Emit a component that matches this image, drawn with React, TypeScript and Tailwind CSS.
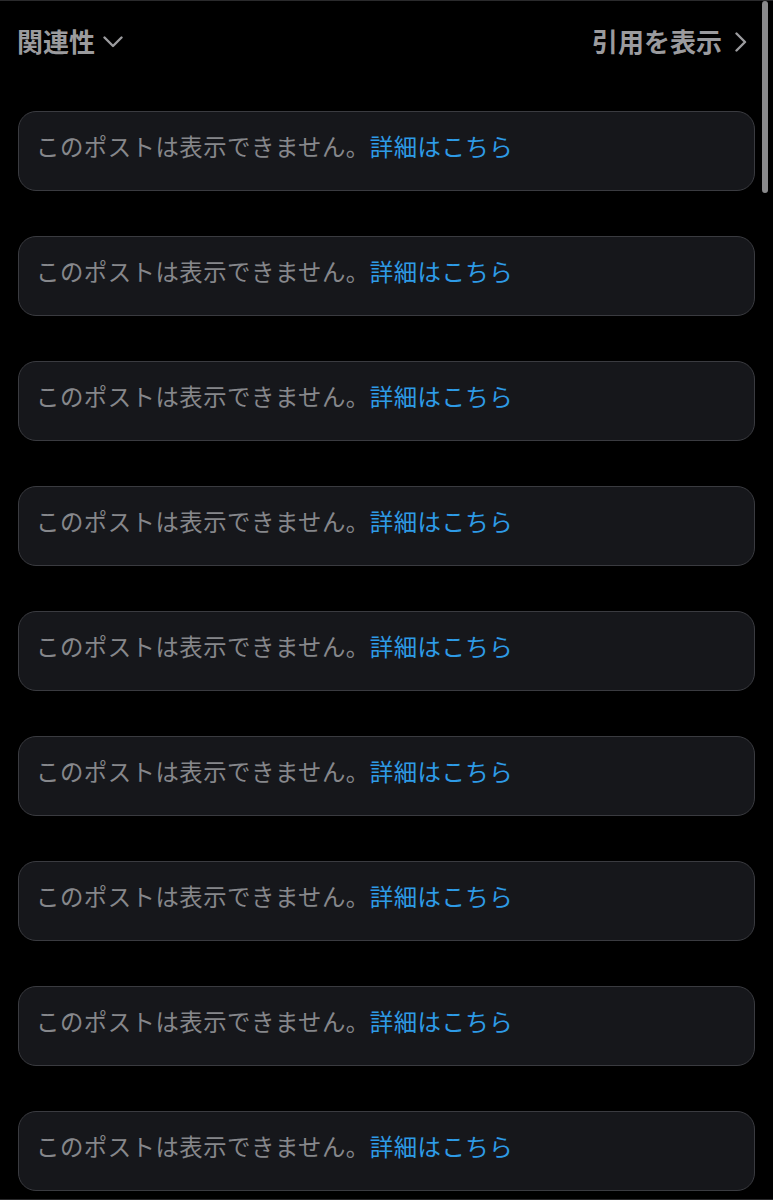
const font = { fontFamily: '"Noto Sans CJK JP", "Noto Sans", sans-serif' };

function HiddenPost() {
  return (
    <div className="flex h-[80px] items-center rounded-[18px] border border-[#3a3b40] bg-[#16171b] pb-[9px] pl-[17px] pr-[17px]">
      <p className="text-[23.4px] leading-none tracking-[0.5px] text-[#86878b]">
        このポストは表示できません。
        <span className="text-[#2e9be6]">詳細はこちら</span>
      </p>
    </div>
  );
}

export default function App() {
  const posts = Array.from({ length: 9 }, (_, i) => i);

  return (
    <div className="relative h-[1200px] overflow-hidden border-t border-b border-[#2a2a2c] bg-black" style={font}>
      {/* scrollbar thumb */}
      <div className="absolute right-[5px] top-0 h-[192px] w-[6px] rounded-full bg-[#8a8a8c]" />

      <div className="flex h-[80px] items-center justify-between pl-[17px] pr-[26px]">
        <button className="flex items-center gap-[8px] text-[26px] font-bold leading-none text-[#9b9b9e]">
          関連性
          <svg width="20" height="12" viewBox="0 0 20 12" fill="none" className="mt-[2px]">
            <polyline points="1.5,1.5 10,10 18.5,1.5" stroke="#9b9b9e" strokeWidth="2.4" strokeLinecap="round" strokeLinejoin="round" />
          </svg>
        </button>
        <button className="flex items-center gap-[13px] text-[26px] font-bold leading-none text-[#9b9b9e]">
          引用を表示
          <svg width="12" height="20" viewBox="0 0 12 20" fill="none" className="mt-[2px]">
            <polyline points="1.5,1.5 10,10 1.5,18.5" stroke="#9b9b9e" strokeWidth="2.4" strokeLinecap="round" strokeLinejoin="round" />
          </svg>
        </button>
      </div>

      <div className="flex flex-col gap-[45px] pl-[18px] pr-[18px] pt-[30px]">
        {posts.map((i) => (
          <HiddenPost key={i} />
        ))}
      </div>
    </div>
  );
}
